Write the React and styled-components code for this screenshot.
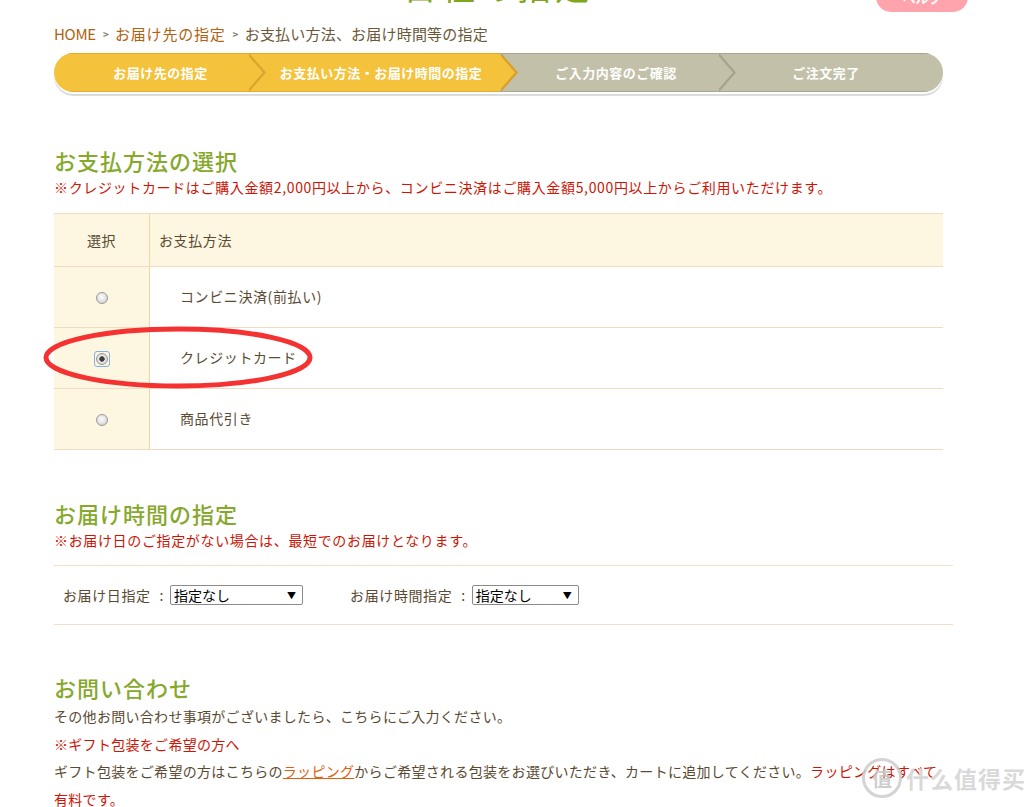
import React from "react";
import styled, { createGlobalStyle } from "styled-components";

const Global = createGlobalStyle`
  html, body { margin: 0; padding: 0; background: #fff; }
  body {
    font-family: "Noto Sans CJK JP", "Noto Sans", sans-serif;
    color: #5a4a32;
    font-size: 14px;
  }
`;

const Page = styled.div`
  position: relative;
  width: 1028px;
  min-height: 807px;
  overflow: hidden;
`;

const TopBar = styled.header`
  display: flex;
  height: 13px;
  overflow: hidden;
  padding: 0 60px 0 403px;
`;

const PageTitle = styled.h1`
  margin: -31px 0 0;
  font-size: 34px;
  line-height: 34px;
  font-weight: 400;
  color: #7fa61c;
  letter-spacing: 4px;
  white-space: nowrap;
`;

const HelpButton = styled.a`
  margin: -18px 0 0 auto;
  width: 92px;
  height: 30px;
  border-radius: 15px;
  background: #ffa3ad;
  color: #fff;
  font-size: 13px;
  font-weight: 700;
  display: flex;
  align-items: center;
  justify-content: center;
  text-decoration: none;
`;

const Main = styled.main`
  padding-left: 54px;
  width: 899px;
`;

const Crumbs = styled.nav`
  margin-top: 10px;
  height: 20px;
  display: flex;
  align-items: center;
  font-size: 15px;
  letter-spacing: 0.2px;
  color: #6b5838;
`;

const CrumbLink = styled.a`
  color: #b0620f;
  text-decoration: none;
  letter-spacing: ${(p) => (p.$latin ? "-0.3px" : "0.8px")};
`;

const Sep = styled.span`
  color: #8a8070;
  font-size: 10px;
  font-weight: 700;
  margin: 0 6px 0 7px;
`;

const StepBar = styled.ol`
  display: flex;
  margin: 10px 0 0;
  padding: 0;
  list-style: none;
  width: 889px;
  height: 39px;
  border-radius: 20px;
  overflow: hidden;
  box-shadow: 0 2px 0 #fff, 0 4px 1px #dadada;
`;

const Step = styled.li`
  position: relative;
  box-sizing: border-box;
  flex: 0 0 ${(p) => p.$w}px;
  display: flex;
  align-items: center;
  justify-content: center;
  padding-left: ${(p) => p.$pl}px;
  padding-right: ${(p) => p.$pr || 0}px;
  background: ${(p) => (p.$active ? "#f5c23b" : "#c3c0a9")};
  border-top: 1px solid ${(p) => (p.$active ? "#dfa82a" : "#a9a58e")};
  border-bottom: 1px solid ${(p) => (p.$active ? "#e3ac2e" : "#aca891")};
  color: #fff;
  font-size: 13px;
  font-weight: 700;
  letter-spacing: 0.5px;
  z-index: ${(p) => p.$z};
  &::before,
  &::after {
    content: ${(p) => (p.$last ? "none" : "''")};
    position: absolute;
    top: -1px;
    bottom: -1px;
    width: 17px;
    clip-path: polygon(0 0, 100% 50%, 0 100%);
  }
  &::before {
    right: -19px;
    background: ${(p) => p.$shade};
  }
  &::after {
    right: -16px;
    background: ${(p) => (p.$active ? "#f5c23b" : "#c3c0a9")};
  }
`;

const Heading = styled.h2`
  margin: ${(p) => p.$mt}px 0 0;
  font-size: 22px;
  line-height: 30px;
  font-weight: 500;
  letter-spacing: 1px;
  color: #86a82c;
`;

const Note = styled.p`
  margin: 2px 0 0;
  font-size: 14px;
  line-height: 20px;
  letter-spacing: 0.65px;
  color: #cc1505;
`;

const TableWrap = styled.div`
  position: relative;
  margin-top: 16px;
  width: 889px;
`;

const Table = styled.table`
  width: 889px;
  border-collapse: collapse;
  font-size: 14px;
  letter-spacing: 0.6px;
`;

const HeadCell = styled.th`
  height: 52px;
  padding: 0 0 0 ${(p) => (p.$center ? 0 : 9)}px;
  text-align: ${(p) => (p.$center ? "center" : "left")};
  font-weight: 400;
  background: #fdf7e1;
  border-top: 1px solid #f1dcc2;
  border-bottom: 1px solid #f1dcc2;
  border-right: ${(p) => (p.$center ? "1px solid #f0d6a6" : "none")};
  width: ${(p) => (p.$center ? "95px" : "auto")};
`;

const SelectCell = styled.td`
  height: 57px;
  padding: 0 0 3px;
  text-align: center;
  background: #fdf6e0;
  border-bottom: 1px solid #f1dcc2;
  border-right: 1px solid #f0d6a6;
`;

const LabelCell = styled.td`
  height: 57px;
  padding: 0 0 3px 30px;
  border-bottom: 1px solid #f1dcc2;
`;

const RadioFrame = styled.span`
  display: inline-flex;
  padding: 1px;
  border: 1px solid ${(p) => (p.$focus ? "#86aee6" : "transparent")};
  border-radius: 3px;
  vertical-align: middle;
`;

const Radio = styled.input.attrs({ type: "radio" })`
  appearance: none;
  margin: 0;
  width: 12px;
  height: 12px;
  border-radius: 50%;
  border: 1px solid #9a9a9a;
  background: radial-gradient(circle at 45% 40%, #fcfcfc 0, #e4e4e4 50%, #c4c4c4 100%);
  &:checked {
    background: radial-gradient(circle at 50% 50%, #3e3e3e 0, #3e3e3e 2.4px, #e9e9e9 3px, #c9c9c9 100%);
  }
`;

const Ellipse = styled.svg`
  position: absolute;
  left: -13px;
  top: 112px;
  width: 274px;
  height: 65px;
  pointer-events: none;
`;

const FormRow = styled.div`
  margin-top: 15px;
  height: 58px;
  border-top: 1px solid #f3dfc8;
  border-bottom: 1px solid #f3dfc8;
  display: flex;
  align-items: center;
  padding-left: 9px;
  font-size: 14px;
  letter-spacing: 0.6px;
`;

const Field = styled.label`
  display: flex;
  align-items: center;
  margin-right: ${(p) => p.$mr || 0}px;
`;

const Colon = styled.span`
  margin: 0 6px 0 9px;
`;

const SelectBox = styled.span`
  box-sizing: border-box;
  width: ${(p) => p.$w}px;
  height: 20px;
  border: 1px solid #8b8b8b;
  border-radius: 2px;
  display: flex;
  align-items: center;
  justify-content: space-between;
  padding: 0 6px 0 3px;
  color: #000;
  font-size: 14px;
  letter-spacing: 0;
  background: #fff;
`;

const Caret = styled.span`
  font-size: 9px;
  color: #000;
`;

const Body = styled.div`
  margin-top: 1px;
  width: 889px;
  font-size: 14px;
  line-height: 27.5px;
  letter-spacing: 0.3px;
`;

const Line = styled.p`
  margin: 0;
  color: ${(p) => (p.$red ? "#cc1505" : "#5a4a32")};
`;

const Red = styled.span`
  color: #cc1505;
`;

const Wrap = styled.a`
  color: #e0600e;
  text-decoration: underline;
`;

const Watermark = styled.div`
  position: absolute;
  left: 862px;
  top: 758px;
  display: flex;
  align-items: center;
  gap: 4px;
  pointer-events: none;
`;

const MarkLogo = styled.span`
  width: 34px;
  height: 34px;
  border-radius: 50%;
  border: 3px solid rgba(205, 205, 205, 0.85);
  display: flex;
  align-items: center;
  justify-content: center;
  color: rgba(200, 200, 200, 0.9);
  font-size: 20px;
  font-weight: 700;
`;

const MarkText = styled.span`
  font-size: 23px;
  font-weight: 700;
  color: rgba(210, 210, 210, 0.85);
  letter-spacing: 1px;
  text-shadow: 0 0 1px #fff;
`;

const steps = [
  { t: "お届け先の指定", w: 193, pl: 20, active: true, shade: "#dca52b", z: 4 },
  { t: "お支払い方法・お届け時間の指定", w: 252, pl: 16, active: true, shade: "#d6a02a", z: 3 },
  { t: "ご入力内容のご確認", w: 218, pl: 16, active: false, shade: "#a6a28b", z: 2 },
  { t: "ご注文完了", w: 226, pl: 10, pr: 18, active: false, last: true, z: 1 },
];

const methods = [
  { label: "コンビニ決済(前払い)", checked: false },
  { label: "クレジットカード", checked: true },
  { label: "商品代引き", checked: false },
];

export default function App() {
  return (
    <Page>
      <Global />
      <TopBar>
        <PageTitle>日程の指定</PageTitle>
        <HelpButton href="#">ヘルプ</HelpButton>
      </TopBar>
      <Main>
        <Crumbs>
          <CrumbLink href="#" $latin>HOME</CrumbLink>
          <Sep>&gt;</Sep>
          <CrumbLink href="#">お届け先の指定</CrumbLink>
          <Sep>&gt;</Sep>
          <span>お支払い方法、お届け時間等の指定</span>
        </Crumbs>

        <StepBar>
          {steps.map((s) => (
            <Step
              key={s.t}
              $w={s.w}
              $pl={s.pl}
              $pr={s.pr}
              $active={s.active}
              $shade={s.shade}
              $last={s.last}
              $z={s.z}
            >
              {s.t}
            </Step>
          ))}
        </StepBar>

        <Heading $mt={53}>お支払方法の選択</Heading>
        <Note>
          ※クレジットカードはご購入金額2,000円以上から、コンビニ決済はご購入金額5,000円以上からご利用いただけます。
        </Note>

        <TableWrap>
          <Table>
            <thead>
              <tr>
                <HeadCell $center>選択</HeadCell>
                <HeadCell>お支払方法</HeadCell>
              </tr>
            </thead>
            <tbody>
              {methods.map((m) => (
                <tr key={m.label}>
                  <SelectCell>
                    <RadioFrame $focus={m.checked}>
                      <Radio name="pay" defaultChecked={m.checked} />
                    </RadioFrame>
                  </SelectCell>
                  <LabelCell>{m.label}</LabelCell>
                </tr>
              ))}
            </tbody>
          </Table>
          <Ellipse viewBox="0 0 274 65">
            <ellipse
              cx="137"
              cy="32.5"
              rx="132"
              ry="28.5"
              fill="none"
              stroke="#f43232"
              strokeWidth="5"
            />
          </Ellipse>
        </TableWrap>

        <Heading $mt={48}>お届け時間の指定</Heading>
        <Note>※お届け日のご指定がない場合は、最短でのお届けとなります。</Note>

        <FormRow>
          <Field $mr={47}>
            お届け日指定<Colon>:</Colon>
            <SelectBox $w={133}>
              指定なし<Caret>▼</Caret>
            </SelectBox>
          </Field>
          <Field>
            お届け時間指定<Colon>:</Colon>
            <SelectBox $w={107}>
              指定なし<Caret>▼</Caret>
            </SelectBox>
          </Field>
        </FormRow>

        <Heading $mt={47}>お問い合わせ</Heading>
        <Body>
          <Line>その他お問い合わせ事項がございましたら、こちらにご入力ください。</Line>
          <Line $red>※ギフト包装をご希望の方へ</Line>
          <Line>
            ギフト包装をご希望の方はこちらの<Wrap href="#">ラッピング</Wrap>
            からご希望される包装をお選びいただき、カートに追加してください。
            <Red>ラッピングはすべて有料です。</Red>
          </Line>
        </Body>
      </Main>
      <Watermark>
        <MarkLogo>值</MarkLogo>
        <MarkText>什么值得买</MarkText>
      </Watermark>
    </Page>
  );
}
